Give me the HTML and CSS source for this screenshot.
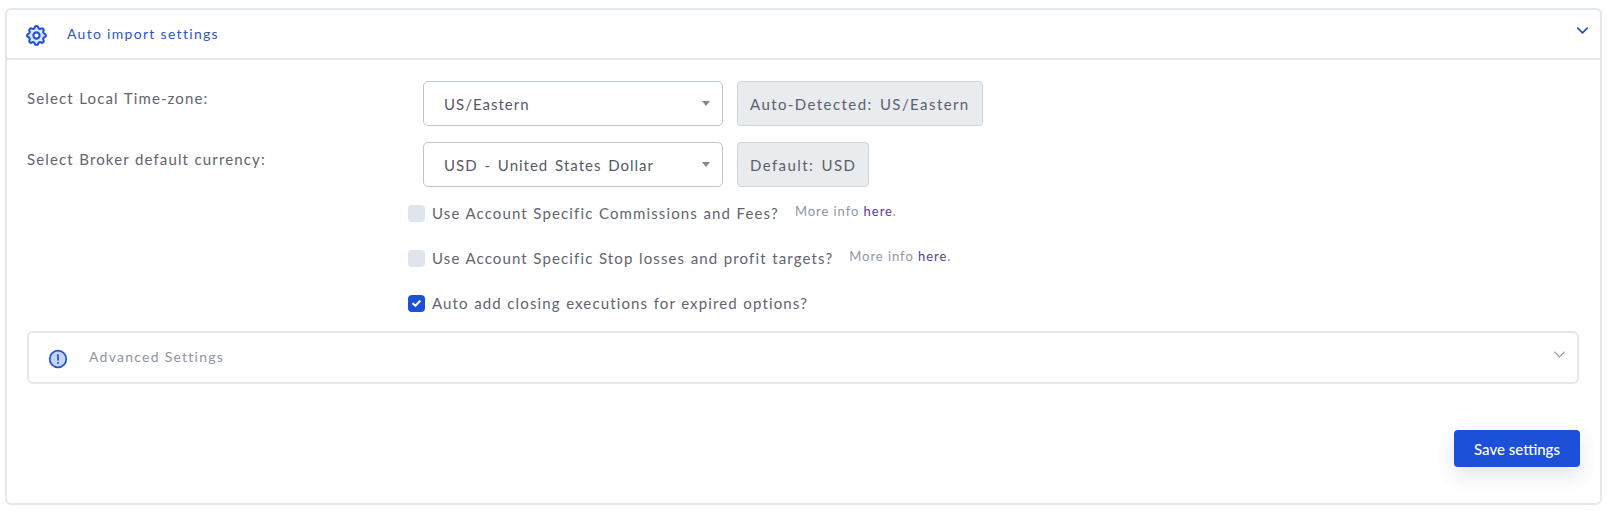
FILE: index.html
```html
<!DOCTYPE html>
<html lang="en">
<head>
<meta charset="utf-8">
<title>Auto import settings</title>
<link rel="stylesheet" href="styles.css">
</head>
<body>
<section class="card">
  <header class="card-head">
    <svg class="gear" viewBox="0 0 24 24" width="25" height="25" fill="none" stroke="#1d50d8" stroke-width="2" stroke-linecap="round" stroke-linejoin="round"><path d="M10.300 4.300c.4-1.800 3-1.800 3.400 0a1.700 1.700 0 0 0 2.600 1.100c1.500-1 3.400.9 2.400 2.400a1.700 1.700 0 0 0 1 2.500c1.800.4 1.800 3 0 3.400a1.700 1.700 0 0 0-1 2.600c1 1.500-.9 3.400-2.400 2.400a1.700 1.700 0 0 0-2.600 1c-.4 1.800-3 1.800-3.400 0a1.700 1.700 0 0 0-2.600-1c-1.500 1-3.400-.9-2.400-2.400a1.700 1.700 0 0 0-1-2.600c-1.800-.4-1.800-3 0-3.400a1.700 1.700 0 0 0 1-2.500c-1-1.500.9-3.400 2.400-2.400a1.700 1.700 0 0 0 2.600-1.100z" fill="#dbe5fb"/><circle cx="12" cy="12" r="3" fill="#fff"/></svg>
    <h2 class="card-title">Auto import settings</h2>
    <svg class="chev chev-main" viewBox="0 0 14 8" width="11" height="7" fill="none" stroke="#1f4bb8" stroke-width="2" stroke-linecap="round" stroke-linejoin="round"><path d="M1 1l6 6 6-6"/></svg>
  </header>
  <div class="card-body">
    <div class="form-row">
      <label class="row-label">Select Local Time-zone:</label>
      <div class="select"><span>US/Eastern</span><i class="caret"></i></div>
      <div class="addon">Auto-Detected: US/Eastern</div>
    </div>
    <div class="form-row">
      <label class="row-label">Select Broker default currency:</label>
      <div class="select"><span>USD - United States Dollar</span><i class="caret"></i></div>
      <div class="addon">Default: USD</div>
    </div>
    <div class="checks">
      <div class="check-row">
        <span class="box"></span>
        <span class="check-text">Use Account Specific Commissions and Fees?</span>
        <small class="info">More info <a class="link">here</a>.</small>
      </div>
      <div class="check-row">
        <span class="box"></span>
        <span class="check-text">Use Account Specific Stop losses and profit targets?</span>
        <small class="info">More info <a class="link">here</a>.</small>
      </div>
      <div class="check-row">
        <span class="box box-on"><svg viewBox="0 0 10 8" width="9" height="7" fill="none" stroke="#fff" stroke-width="2.400" stroke-linecap="round" stroke-linejoin="round"><path d="M1.200 4.200l2.500 2.300 5-5"/></svg></span>
        <span class="check-text">Auto add closing executions for expired options?</span>
      </div>
    </div>
    <div class="advanced">
      <svg class="alert" viewBox="0 0 20 20" width="20" height="20"><circle cx="10" cy="10" r="8.300" fill="#c3d4fa" stroke="#1d50d8" stroke-width="1.700"/><path d="M10 5.800v5" stroke="#1d50d8" stroke-width="1.700" stroke-linecap="round"/><circle cx="10" cy="14" r="1" fill="#1d50d8"/></svg>
      <span class="adv-title">Advanced Settings</span>
      <svg class="chev chev-adv" viewBox="0 0 14 8" width="11" height="7" fill="none" stroke="#8a8f9c" stroke-width="1.300" stroke-linecap="round" stroke-linejoin="round"><path d="M1 1l6 6 6-6"/></svg>
    </div>
    <div class="actions"><button class="save" type="button">Save settings</button></div>
  </div>
</section>
</body>
</html>
```
FILE: styles.css
```css
* { box-sizing: border-box; }
html, body { margin: 0; background: #fff; }
body {
  padding: 8px 5px 6px 5px;
  font-family: "Lato", "Open Sans", sans-serif;
  color: #62646e;
}
.card {
  height: 497px;
  border: 2px solid #e2e8ee;
  border-radius: 6px;
  display: flex;
  flex-direction: column;
}
.card-head {
  height: 50px;
  flex: none;
  display: flex;
  align-items: center;
  padding: 0 12px 0 17px;
  border-bottom: 2px solid #e2e8ee;
}
.gear { margin-top: 2px; }
.card-title {
  margin: -1px 0 0 18px;
  font-size: 14px;
  font-weight: 400;
  letter-spacing: 1.3px;
  color: #2f55c4;
}
.chev-main { margin-left: auto; margin-top: -7px; }
.card-body {
  flex: 1;
  display: flex;
  flex-direction: column;
  padding: 21px 20px 0 20px;
}
.form-row {
  display: flex;
  align-items: flex-start;
  margin-bottom: 16px;
  height: 45px;
}
.row-label {
  width: 396px;
  flex: none;
  font-size: 15px;
  letter-spacing: 1.13px;
  word-spacing: 0.5px;
  padding-top: 8px;
}
.select {
  width: 300px;
  height: 45px;
  border: 1px solid #bcc6cf;
  border-radius: 5px;
  display: flex;
  align-items: center;
  justify-content: space-between;
  padding: 0 12px 0 20px;
  font-size: 15px;
  letter-spacing: 1px;
  word-spacing: 2px;
  color: #555966;
}
.caret {
  width: 0;
  height: 0;
  border-left: 4px solid transparent;
  border-right: 4px solid transparent;
  border-top: 5px solid #888;
}
.addon {
  margin-left: 14px;
  height: 45px;
  padding: 0 12px;
  display: flex;
  align-items: center;
  background: #e9ecef;
  border: 1px solid #ced4da;
  border-radius: 4px;
  font-size: 15px;
  letter-spacing: 1.42px;
  word-spacing: 2px;
  color: #5c606c;
}
.checks {
  display: flex;
  flex-direction: column;
  gap: 27px;
  margin: 1px 0 0 381px;
}
.check-row {
  display: flex;
  align-items: center;
  height: 18px;
}
.box {
  width: 17px;
  height: 17px;
  border-radius: 4px;
  background: #dfe5ec;
  margin-right: 7px;
  display: flex;
  align-items: center;
  justify-content: center;
}
.box-on { background: #1d50d8; }
.check-text {
  font-size: 15px;
  letter-spacing: 1.13px;
  word-spacing: 0.5px;
}
.info {
  margin: -4px 0 0 16px;
  font-size: 13px;
  letter-spacing: 0.95px;
  color: #8f95a3;
}
.link { color: #5b3a9e; }
.advanced {
  margin-top: 19px;
  width: 1552px;
  height: 53px;
  flex: none;
  border: 2px solid #e2e8ee;
  border-radius: 6px;
  display: flex;
  align-items: center;
  padding: 0 12px 0 19px;
}
.alert { margin-top: 2px; }
.adv-title {
  margin: -3px 0 0 21px;
  font-size: 14px;
  letter-spacing: 1.25px;
  color: #8f95a3;
}
.chev-adv { margin-left: auto; margin-top: -6px; }
.actions {
  display: flex;
  justify-content: flex-end;
  margin-top: 46px;
  width: 1553px;
}
.save {
  width: 126px;
  height: 37px;
  border: 0;
  border-radius: 4px;
  background: #1d50d8;
  color: #fff;
  font-family: inherit;
  font-size: 15px;
  font-weight: 500;
  box-shadow: 0 8px 20px rgba(40, 60, 100, 0.14);
}
```
